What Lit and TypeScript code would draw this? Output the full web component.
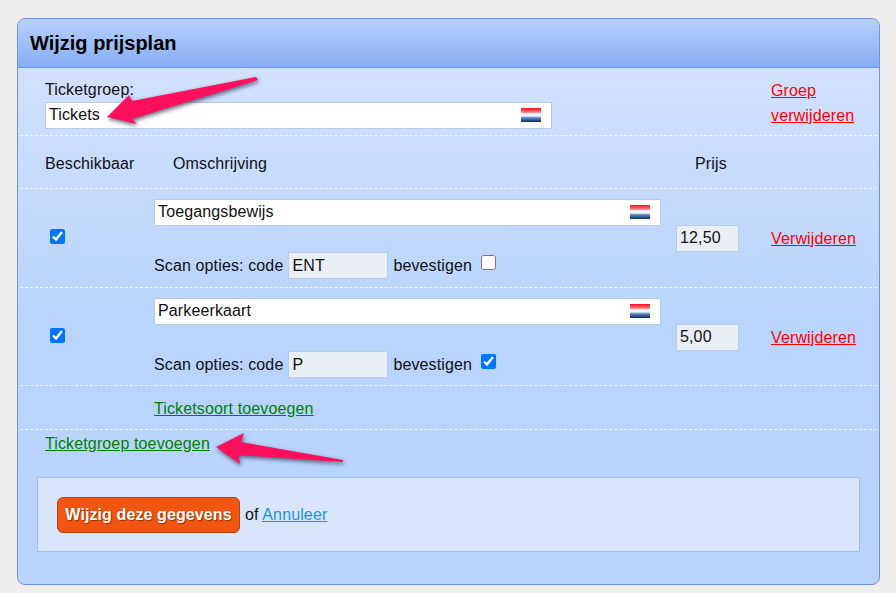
import { LitElement, html, css } from "lit";
import { customElement } from "lit/decorators.js";

const flagInput = (value: string) => html`<div class="flagged">
  <input class="text" .value=${value} />
  <span class="flag"></span>
</div>`;

@customElement("app-root")
export class AppRoot extends LitElement {
  static styles = css`
    :host {
      display: block;
      position: relative;
      height: 593px;
      box-sizing: border-box;
      padding: 18px 16px 8px 17px;
      background: #eeeeee;
      font: 16px/25px "Liberation Sans", Arial, sans-serif;
      letter-spacing: 0.13px;
      color: #111;
      overflow: hidden;
    }
    .card {
      height: 567px;
      box-sizing: border-box;
      border: 1px solid #6f93d8;
      border-radius: 8px;
      background: linear-gradient(#d1e1fd 0, #d0e0fd 60px, #b9d4fd 300px, #b8d3fd 100%);
      overflow: hidden;
    }
    header {
      height: 48px;
      border-bottom: 1px solid #6f93d8;
      background: linear-gradient(#b6d0fb, #86aef4);
      padding-left: 12px;
      font-size: 20px;
      font-weight: bold;
      letter-spacing: 0;
      line-height: 48px;
      color: #000;
    }
    .row {
      display: grid;
      grid-template-columns: 109px 522px 95px 1fr;
      margin: 0 2px;
      padding-left: 25px;
      border-bottom: 1px dashed rgba(255, 255, 255, 0.75);
    }
    .group {
      height: 68px;
      box-sizing: border-box;
      padding-top: 9px;
    }
    .group-main {
      grid-column: 1 / 3;
      line-height: 25px;
    }
    .group-del {
      grid-column: 4;
      margin-top: 1px;
    }
    .heads {
      height: 53px;
      box-sizing: border-box;
      align-items: center;
      padding-top: 3px;
    }
    .indent {
      padding-left: 19px;
    }
    .item {
      height: 99px;
      box-sizing: border-box;
      padding-top: 10px;
      align-items: start;
      align-content: start;
      grid-template-rows: 80px;
    }
    .item.second {
      height: 98px;
    }
    .check-cell {
      padding-left: 5px;
      display: flex;
      margin-top: 30px;
    }
    .price-cell {
      margin-top: 26px;
    }
    .item .del {
      margin-top: 27px;
    }
    input[type="checkbox"] {
      width: 15px;
      height: 15px;
      margin: 0;
      accent-color: #0075ff;
    }
    .desc {
      display: flex;
      flex-direction: column;
      gap: 26px;
      width: 507px;
    }
    .scan {
      display: flex;
      align-items: center;
      height: 27px;
      gap: 5px;
    }
    .flagged {
      position: relative;
      width: 507px;
      height: 27px;
    }
    input.text,
    input.code,
    input.price {
      display: block;
      box-sizing: border-box;
      height: 27px;
      margin: 0;
      padding: 0 3px;
      border: 1px solid #b6cde8;
      border-radius: 0;
      outline: none;
      font: 16px "Liberation Sans", Arial, sans-serif;
      letter-spacing: 0.13px;
      color: #111;
    }
    input.text {
      width: 507px;
      padding-bottom: 2px;
      background: #fff;
    }
    input.code {
      width: 100px;
      background: #e9eff5;
    }
    input.price {
      width: 63px;
      padding-bottom: 1px;
      background: #e9eff5;
    }
    .flag {
      position: absolute;
      right: 11px;
      top: 6px;
      width: 20px;
      height: 14px;
      background: linear-gradient(
        #f9101c 0,
        #ff7a80 30%,
        #ffffff 42%,
        #e8edf5 58%,
        #5b87c0 70%,
        #0b2a6e 100%
      );
    }
    .scan input[type="checkbox"] {
      margin-left: 4px;
      margin-top: -6px;
    }
    a {
      text-decoration: underline;
    }
    .del {
      color: #ff0000;
    }
    .add {
      color: #008000;
    }
    .adds {
      height: 44px;
      box-sizing: border-box;
      align-items: center;
      padding-top: 2px;
    }
    .adds a {
      grid-column: 2;
    }
    .add-group {
      padding: 1px 0 0 27px;
      height: 47px;
      box-sizing: border-box;
    }
    .actions {
      margin: 0 19px 0 19px;
      height: 75px;
      box-sizing: border-box;
      border: 1px solid #9fbdf2;
      background: #d9e5fd;
      display: flex;
      align-items: center;
      padding-left: 19px;
      gap: 5px;
    }
    .submit {
      box-sizing: border-box;
      height: 36px;
      width: 183px;
      padding: 0;
      border: 1px solid #b0440f;
      border-radius: 6px;
      background: #f25511;
      color: #fff;
      font: bold 16px "Liberation Sans", Arial, sans-serif;
      letter-spacing: 0.1px;
      text-shadow: 1px 1px 1px #8c3505;
    }
    .cancel {
      color: #1a96d8;
    }
    .arrows {
      position: absolute;
      left: 0;
      top: 0;
      pointer-events: none;
      filter: drop-shadow(1px 2px 2px rgba(30, 35, 60, 0.7));
    }
  `;

  render() {
    return html`
      <div class="card">
        <header>Wijzig prijsplan</header>
        <div class="row group">
          <div class="group-main">
            <div>Ticketgroep:</div>
            ${flagInput("Tickets")}
          </div>
          <a class="del group-del" href="#">Groep verwijderen</a>
        </div>
        <div class="row heads">
          <span>Beschikbaar</span>
          <span class="indent">Omschrijving</span>
          <span class="indent">Prijs</span>
        </div>
        ${this.item("Toegangsbewijs", "ENT", "12,50", false, "")}
        ${this.item("Parkeerkaart", "P", "5,00", true, "second")}
        <div class="row adds">
          <a class="add" href="#">Ticketsoort toevoegen</a>
        </div>
        <div class="add-group"><a class="add" href="#">Ticketgroep toevoegen</a></div>
        <div class="actions">
          <button class="submit">Wijzig deze gegevens</button>
          <span>of <a class="cancel" href="#">Annuleer</a></span>
        </div>
      </div>
      <svg class="arrows" width="896" height="593" viewBox="0 0 896 593">
        <polygon fill="#ff0f5c" points="256,77 258,80 132,119 137,124 107,117 129,95 132,101" />
        <polygon fill="#ff0f5c" points="343,460 343,462 238,455 240,464 216,447 244,433 241,442" />
      </svg>
    `;
  }

  item(name: string, code: string, price: string, confirm: boolean, cls: string) {
    return html`<div class="row item ${cls}">
      <div class="check-cell"><input type="checkbox" checked /></div>
      <div class="desc">
        ${flagInput(name)}
        <div class="scan">
          <span>Scan opties: code</span>
          <input class="code" .value=${code} />
          <span>bevestigen</span>
          <input type="checkbox" .checked=${confirm} />
        </div>
      </div>
      <div class="price-cell"><input class="price" .value=${price} /></div>
      <a class="del" href="#">Verwijderen</a>
    </div>`;
  }
}
